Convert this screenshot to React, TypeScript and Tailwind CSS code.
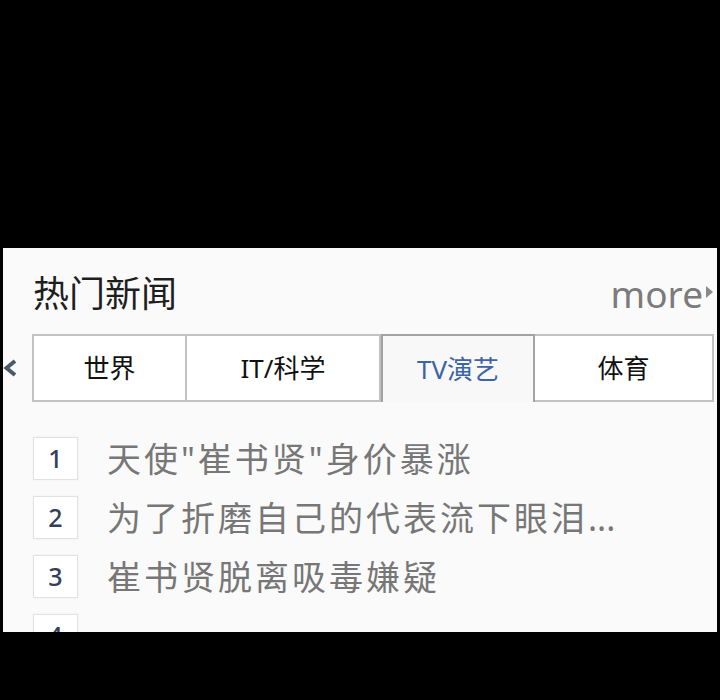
const tabs = [
  { label: "世界", width: "w-[155px]", active: false },
  { label: "IT/科学", width: "w-[194px]", active: false },
  { label: "TV演艺", width: "w-[154px]", active: true },
  { label: "体育", width: "w-[179px]", active: false },
];

const news = [
  { text: '天使"崔书贤"身价暴涨', more: false },
  { text: "为了折磨自己的代表流下眼泪", more: true },
  { text: "崔书贤脱离吸毒嫌疑", more: false },
  { text: "", more: false },
];

const font = "font-['Noto_Sans','Noto_Sans_CJK_SC',sans-serif]";

export default function App() {
  return (
    <div className={`min-h-[700px] bg-black pt-[248px] ${font}`}>
      <div className="relative ml-[3px] h-[384px] w-[714px] overflow-hidden bg-[#fafafa]">
        <div className="flex items-end justify-between pl-[30px] pr-[4px] pt-[27px]">
          <h2 className="text-[36px] leading-none text-[#1e1e1e]">热门新闻</h2>
          <a href="#" className="flex items-center gap-[3px] text-[37px] leading-none text-[#7b7b7b]">
            more
            <span className="mb-[4px] h-0 w-0 border-y-[6px] border-l-[7px] border-y-transparent border-l-[#8a8a8a]" />
          </a>
        </div>

        <svg className="absolute left-0 top-[111px]" width="14" height="18" viewBox="0 0 14 18">
          <polyline points="12,2 3.5,9 12,16" fill="none" stroke="#4b5868" strokeWidth="4" />
        </svg>

        <div className="ml-[29px] mt-[22px] flex h-[68px]">
          {tabs.map((tab, i) => (
            <div
              key={tab.label}
              className={`flex shrink-0 items-center justify-center text-[26px] leading-none ${tab.width} ${
                tab.active
                  ? "border-x-2 border-t-2 border-[#a3a3a3] bg-[#f8f8f8] text-[#3c64a8]"
                  : `border-y-2 border-[#c2c2c2] bg-white text-[#111] ${
                      i === 0 ? "border-x-2" : ""
                    } ${i === 1 || i === 3 ? "border-r-2" : ""}`
              }`}
            >
              {tab.label}
            </div>
          ))}
        </div>

        <ul className="ml-[30px] mt-[35px] flex flex-col gap-[16px]">
          {news.map((item, i) => (
            <li key={i} className="flex items-center gap-[29px]">
              <span className="flex h-[43px] w-[45px] shrink-0 items-center justify-center border border-[#e2e2e2] bg-white text-[25px] font-medium leading-none text-[#33405a] shadow-[0_0_2px_rgba(0,0,0,0.06)]">
                {i + 1}
              </span>
              <span className="text-[34px] leading-none tracking-[3px] text-[#777]">
                {item.text}
                {item.more && <span className="tracking-normal">...</span>}
              </span>
            </li>
          ))}
        </ul>
      </div>
    </div>
  );
}
